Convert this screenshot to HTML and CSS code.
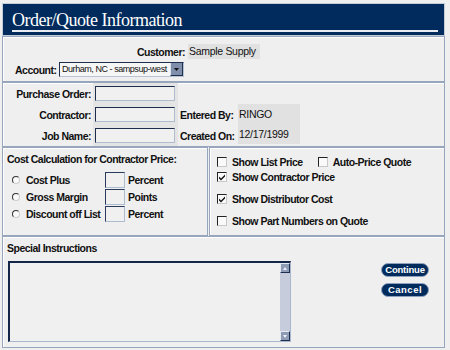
FILE: index.html
```html
<!DOCTYPE html>
<html lang="en">

<head>
    <meta charset="UTF-8">
    <title>Order/Quote Information</title>
    <link rel="stylesheet" href="styles.css">
</head>

<body>
    <div class="panel">
        <div class="header">
            <h1>Order/Quote Information</h1>
        </div>

        <div class="box customer">
            <div class="cust-row">
                <span class="label cust-label">Customer:</span>
                <span class="value">Sample Supply</span>
            </div>
            <div class="account-row">
                <span class="label">Account:</span>
                <div class="select">
                    <span class="select-text">Durham, NC - sampsup-west</span>
                    <span class="select-btn">
                        <svg width="5" height="3" viewBox="0 0 5 3"><path d="M0 0H5L2.5 3Z" fill="#111" /></svg>
                    </span>
                </div>
            </div>
        </div>

        <div class="box order">
            <div class="order-grid">
                <span class="label lab-right">Purchase Order:</span>
                <span class="field-cell"><span class="field"></span></span>
                <span></span>
                <span></span>

                <span class="label lab-right">Contractor:</span>
                <span class="field-cell"><span class="field"></span></span>
                <span class="label lab-left">Entered By:</span>
                <span class="info-cell">
                    <span class="info-line">RINGO</span>
                    <span class="info-line">12/17/1999</span>
                </span>

                <span class="label lab-right">Job Name:</span>
                <span class="field-cell"><span class="field"></span></span>
                <span class="label lab-left">Created On:</span>
            </div>
        </div>

        <div class="split">
            <div class="box cost">
                <div class="label cost-title">Cost Calculation for Contractor Price:</div>
                <div class="cost-grid">
                    <span class="radio"></span>
                    <span class="label">Cost Plus</span>
                    <span class="small-field"></span>
                    <span class="label unit">Percent</span>

                    <span class="radio"></span>
                    <span class="label">Gross Margin</span>
                    <span class="small-field"></span>
                    <span class="label unit">Points</span>

                    <span class="radio"></span>
                    <span class="label">Discount off List</span>
                    <span class="small-field"></span>
                    <span class="label unit">Percent</span>
                </div>
            </div>

            <div class="box options">
                <div class="opt-row first">
                    <span class="check"></span>
                    <span class="label">Show List Price</span>
                    <span class="check auto"></span>
                    <span class="label">Auto-Price Quote</span>
                </div>
                <div class="opt-row">
                    <span class="check on">
                        <svg width="8" height="8" viewBox="0 0 8 8"><path d="M1 3.5L3 5.5L7 1.5V3.5L3 7.5L1 5.5Z" fill="#111" /></svg>
                    </span>
                    <span class="label">Show Contractor Price</span>
                </div>
                <div class="opt-row spaced">
                    <span class="check on">
                        <svg width="8" height="8" viewBox="0 0 8 8"><path d="M1 3.5L3 5.5L7 1.5V3.5L3 7.5L1 5.5Z" fill="#111" /></svg>
                    </span>
                    <span class="label">Show Distributor Cost</span>
                </div>
                <div class="opt-row spaced">
                    <span class="check"></span>
                    <span class="label">Show Part Numbers on Quote</span>
                </div>
            </div>
        </div>

        <div class="box notes">
            <div class="label notes-title">Special Instructions</div>
            <div class="notes-row">
                <div class="textarea">
                    <div class="scrollbar">
                        <span class="scroll-btn">
                            <svg width="4" height="3" viewBox="0 0 4 3"><path d="M0 3H4L2 0Z" fill="#eef" /></svg>
                        </span>
                        <span class="scroll-btn">
                            <svg width="4" height="3" viewBox="0 0 4 3"><path d="M0 0H4L2 3Z" fill="#eef" /></svg>
                        </span>
                    </div>
                </div>
                <div class="buttons">
                    <button type="button" class="btn">Continue</button>
                    <button type="button" class="btn btn-cancel">Cancel</button>
                </div>
            </div>
        </div>
    </div>
</body>

</html>
```

FILE: styles.css
```css
body {
    margin: 0;
    background-color: #efefef;
    font-family: 'Liberation Sans', Arial, sans-serif;
    font-size: 10.5px;
    letter-spacing: -0.3px;
    color: #111;
}

.panel {
    width: 443px;
    margin: 3px 0 0 2px;
}

.header {
    height: 31px;
    background-color: #002b5c;
    border: 1px solid #c4ccd8;
    padding: 0 6px 0 9px;
}

h1 {
    margin: 0;
    padding-top: 6px;
    font-family: 'Liberation Serif', 'Times New Roman', serif;
    font-weight: normal;
    font-size: 18px;
    letter-spacing: -0.5px;
    line-height: 20px;
    color: #fff;
    border-bottom: 2px solid #e8ecf2;
}

.box {
    border: 1px solid #97a5bd;
    box-shadow: inset 1px 1px 0 #fff;
}

.label {
    font-weight: bold;
    letter-spacing: -0.5px;
    white-space: nowrap;
}

/* customer + account */
.customer {
    height: 44px;
}

.cust-row {
    display: flex;
    align-items: center;
    margin-top: 7px;
    height: 15px;
}

.cust-label {
    width: 182px;
    text-align: right;
    padding-right: 3px;
}

.value {
    background-color: #e1e1e1;
    padding: 0 4px 0 1px;
    line-height: 15px;
}

.account-row {
    display: flex;
    align-items: center;
    margin-top: 3px;
    padding-left: 12px;
    height: 15px;
}

.account-row .label {
    width: 44px;
}

.select {
    display: flex;
    width: 123px;
    height: 13px;
    border: 1px solid #1f2f4f;
    border-right-color: #b8c4d4;
    border-bottom-color: #b8c4d4;
    background-color: #f6f6f6;
}

.select-text {
    flex: 1;
    font-size: 9px;
    letter-spacing: -0.45px;
    line-height: 13px;
    padding-left: 2px;
    white-space: nowrap;
    overflow: hidden;
}

.select-btn {
    width: 11px;
    background-color: #7f8fab;
    border-left: 1px solid #dde3ec;
    border-right: 1px solid #1f2f4f;
    border-bottom: 1px solid #1f2f4f;
    display: flex;
    align-items: center;
    justify-content: center;
}

/* order details */
.order {
    height: 63px;
}

.order-grid {
    display: grid;
    grid-template-columns: 90px 85px 60px 62px;
    grid-template-rows: 21px 21px 21px;
    align-items: center;
}

.lab-right {
    text-align: right;
    padding-right: 2px;
}

.lab-left {
    padding-left: 2px;
}

.field-cell {
    align-self: stretch;
    background-color: #e4e4e4;
    display: flex;
    align-items: center;
    padding-left: 2px;
}

.field {
    width: 78px;
    height: 13px;
    background-color: #f0f0f0;
    border: 1px solid #1e2d4c;
    border-right-color: #aebcd0;
    border-bottom-color: #aebcd0;
}

.info-cell {
    grid-row: 2 / 4;
    grid-column: 4;
    align-self: stretch;
    margin: 0 0 2px;
    background-color: #e1e1e1;
    display: flex;
    flex-direction: column;
    justify-content: space-around;
    padding-left: 1px;
}

/* cost calculation + options */
.split {
    display: flex;
}

.cost {
    width: 204px;
    height: 87px;
    margin-right: 1px;
}

.cost-title {
    padding: 4px 0 0 4px;
    line-height: 14px;
}

.cost-grid {
    display: grid;
    grid-template-columns: 14px 79px 20px auto;
    grid-auto-rows: 17px;
    align-items: center;
    margin-top: 5px;
    padding-left: 9px;
}

.radio {
    width: 6px;
    height: 6px;
    border-radius: 50%;
    border: 1px solid #333;
    border-right-color: #ccc;
    border-bottom-color: #ccc;
    background-color: #fafafa;
}

.small-field {
    height: 14px;
    border: 1px solid #2a3a5c;
    border-right-color: #aebcd0;
    border-bottom-color: #aebcd0;
    background-color: #f0f0f0;
}

.unit {
    padding-left: 3px;
}

.options {
    flex: 1;
    height: 87px;
    padding-left: 7px;
}

.opt-row {
    display: flex;
    align-items: center;
    height: 14px;
    gap: 5px;
}

.opt-row.first {
    margin-top: 7px;
}

.opt-row + .opt-row {
    margin-top: 1px;
}

.opt-row.spaced {
    margin-top: 8px;
}

.check {
    width: 8px;
    height: 8px;
    border: 1px solid #222;
    border-right-color: #c8c8c8;
    border-bottom-color: #c8c8c8;
    background-color: #fafafa;
    display: flex;
    align-items: center;
    justify-content: center;
}

.check.auto {
    margin-left: 10px;
}

/* special instructions */
.notes {
    height: 110px;
}

.notes-title {
    padding: 4px 0 0 4px;
    line-height: 14px;
}

.notes-row {
    display: flex;
    margin-top: 6px;
    padding: 0 15px 0 5px;
}

.textarea {
    width: 280px;
    height: 78px;
    border: 2px solid #14254a;
    border-right: 1px solid #a9b7cc;
    border-bottom: 1px solid #a9b7cc;
    background-color: #f0f0f0;
    display: flex;
    justify-content: flex-end;
}

.scrollbar {
    width: 10px;
    background-color: #c6ccdc;
    display: flex;
    flex-direction: column;
    justify-content: space-between;
}

.scroll-btn {
    height: 8px;
    background-color: #8e9bb5;
    border-right: 1px solid #1f2f4f;
    border-bottom: 1px solid #1f2f4f;
    border-top: 1px solid #e6eaf2;
    border-left: 1px solid #e6eaf2;
    display: flex;
    align-items: center;
    justify-content: center;
}

.buttons {
    margin-left: auto;
    margin-top: 2px;
    display: flex;
    flex-direction: column;
    gap: 6px;
}

.btn {
    width: 48px;
    height: 14px;
    padding: 0;
    background-color: #002b5c;
    color: #fff;
    border: 1px solid #8ea0bc;
    border-radius: 7px;
    font-family: 'Liberation Sans', Arial, sans-serif;
    font-weight: bold;
    font-size: 9.5px;
    letter-spacing: -0.2px;
    line-height: 12px;
    cursor: pointer;
}

.btn-cancel {
    letter-spacing: 0.5px;
}
```
